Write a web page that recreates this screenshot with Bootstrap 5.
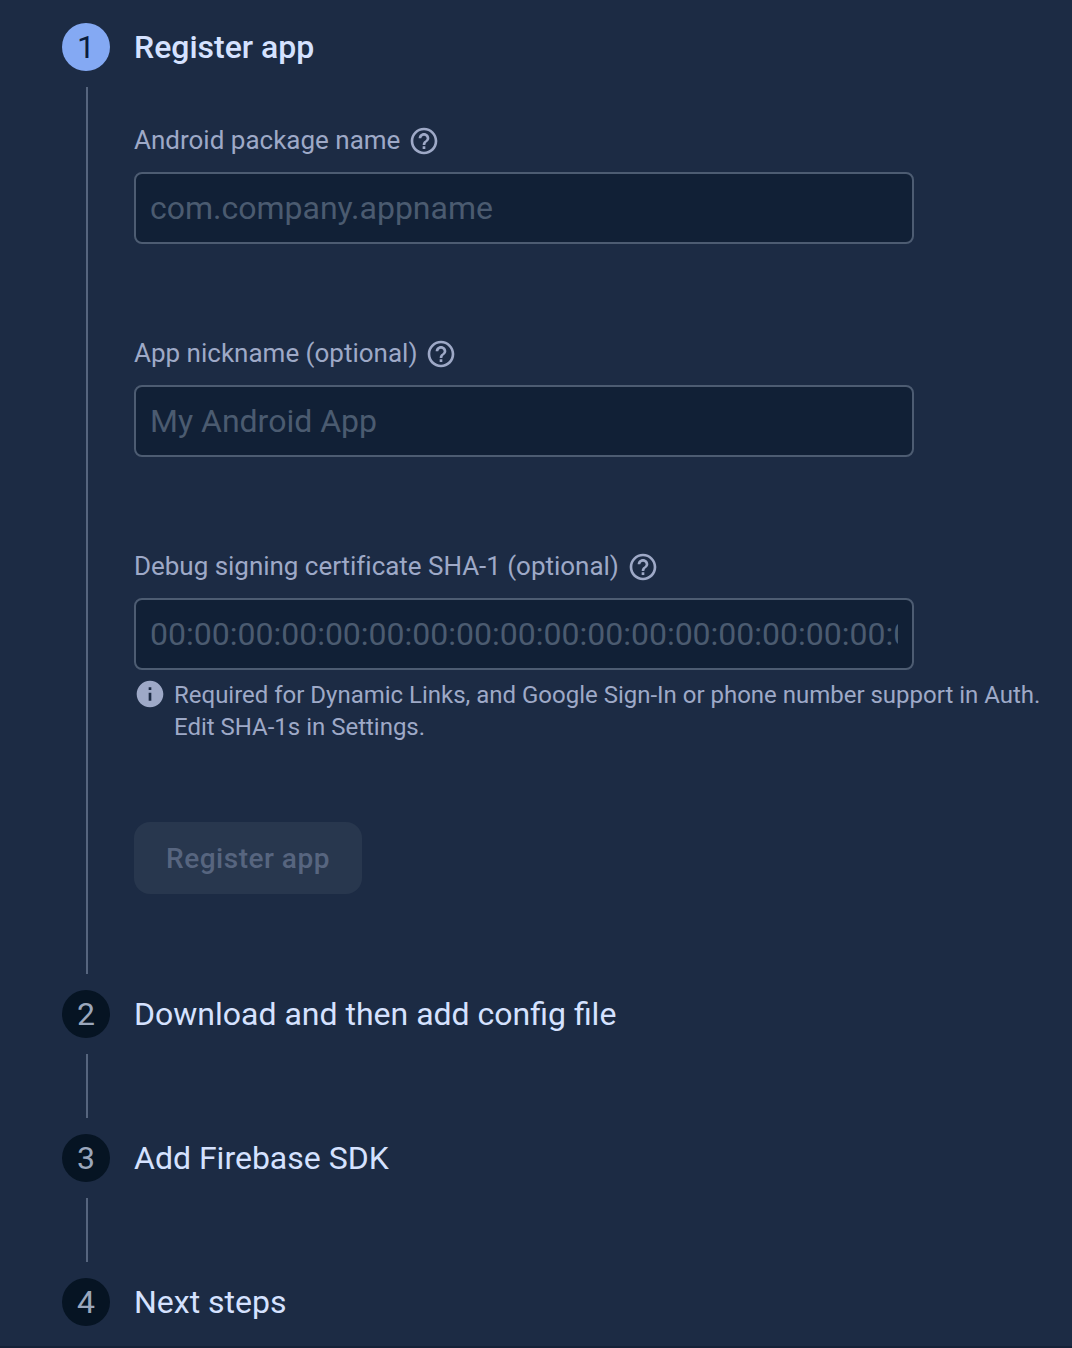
<!DOCTYPE html>
<html lang="en">
<head>
<meta charset="utf-8">
<meta name="viewport" content="width=device-width, initial-scale=1">
<title>Register app</title>
<link href="https://cdn.jsdelivr.net/npm/bootstrap@5.3.0/dist/css/bootstrap.min.css" rel="stylesheet">
<style>
body{background:#1c2b44;font-family:Roboto,sans-serif;height:1348px;overflow:hidden;color:#d5e2ff}
.stepper{padding:23px 0 0 62px;height:1346px}
.rail{width:48px;margin-right:24px}
.bullet{width:48px;height:48px;background:#061423;color:#9ba7bc;font-size:32px;line-height:48px}
.bullet.on{background:#84a9f3;color:#0a1c3c}
.rule{width:2px;background:#56657e;margin:16px 0 16px 2px}
.title{font-size:32px;line-height:48px}
.strong-text{font-weight:500}
.s1{height:967px}.s2{height:144px}
.fields{padding-top:53px}
.lab{font-size:26px;line-height:32px;height:32px;color:#9ea9c7}
.lab svg{margin-top:2px}
.field{height:213px}
.field.short{height:120px}
.field.short .lab{letter-spacing:-.03px}
.field .form-control{width:780px;height:72px;margin-top:16px;background:#112036;border:2px solid #4d5c72;border-radius:8px;padding:0 14px;font-size:32px;color:#d5e2ff}
.field .form-control::placeholder{color:#4b5b70;opacity:1}
.hint{font-size:24px;line-height:32px;margin-top:9px;color:#9ea9c7;letter-spacing:-.01px}
.hint svg{margin-top:-1px}
.reg{width:228px;height:72px;border-radius:16px;font-size:28px;letter-spacing:.5px;border:0;margin-top:79px;padding:2px 0 0}
.reg:disabled{background:#28374e;color:#57657f;opacity:1}
.foot{height:2px;background:#152238}
</style>
</head>
<body>
<svg class="d-none"><symbol id="help" viewBox="0 0 24 24"><path fill="currentColor" d="M11 18h2v-2h-2v2zm1-16C6.480 2 2 6.480 2 12s4.480 10 10 10 10-4.480 10-10S17.520 2 12 2zm0 18c-4.410 0-8-3.590-8-8s3.590-8 8-8 8 3.590 8 8-3.590 8-8 8zm0-14c-2.210 0-4 1.790-4 4h2c0-1.100.9-2 2-2s2 .9 2 2c0 2-3 1.750-3 5h2c0-2.250 3-2.500 3-5 0-2.210-1.790-4-4-4z"/></symbol></svg>
<main class="stepper d-flex flex-column">
<section class="s1 d-flex">
<div class="rail d-flex flex-column align-items-center"><div class="bullet on rounded-circle text-center">1</div><div class="rule flex-grow-1"></div></div>
<div>
<h2 class="title strong-text m-0">Register app</h2>
<form class="fields">
<div class="field"><label class="lab d-flex align-items-center" for="pkg"><span>Android package name</span><svg class="ms-2" width="32" height="32"><use href="#help"/></svg></label><input id="pkg" class="form-control" placeholder="com.company.appname"></div>
<div class="field"><label class="lab d-flex align-items-center" for="nick"><span>App nickname (optional)</span><svg class="ms-2" width="32" height="32"><use href="#help"/></svg></label><input id="nick" class="form-control" placeholder="My Android App"></div>
<div class="field short"><label class="lab d-flex align-items-center" for="sha"><span>Debug signing certificate SHA-1 (optional)</span><svg class="ms-2" width="32" height="32"><use href="#help"/></svg></label><input id="sha" class="form-control" placeholder="00:00:00:00:00:00:00:00:00:00:00:00:00:00:00:00:00:00:00:00"></div>
<div class="hint d-flex"><svg class="me-2 flex-shrink-0" width="32" height="32" viewBox="0 0 24 24"><path fill="currentColor" d="M12 2C6.480 2 2 6.480 2 12s4.480 10 10 10 10-4.480 10-10S17.520 2 12 2zm1 15h-2v-6h2v6zm0-8h-2V7h2v2z"/></svg><div>Required for Dynamic Links, and Google Sign-In or phone number support in Auth.<br>Edit SHA-1s in Settings.</div></div>
<button class="btn reg strong-text" disabled>Register app</button>
</form>
</div>
</section>
<section class="s2 d-flex"><div class="rail d-flex flex-column align-items-center"><div class="bullet rounded-circle text-center">2</div><div class="rule flex-grow-1"></div></div><h2 class="title fw-normal m-0">Download and then add config file</h2></section>
<section class="s2 d-flex"><div class="rail d-flex flex-column align-items-center"><div class="bullet rounded-circle text-center">3</div><div class="rule flex-grow-1"></div></div><h2 class="title fw-normal m-0">Add Firebase SDK</h2></section>
<section class="d-flex"><div class="rail"><div class="bullet rounded-circle text-center">4</div></div><h2 class="title fw-normal m-0">Next steps</h2></section>
</main>
<div class="foot"></div>
<script src="https://cdn.jsdelivr.net/npm/bootstrap@5.3.0/dist/js/bootstrap.bundle.min.js"></script>
</body>
</html>
